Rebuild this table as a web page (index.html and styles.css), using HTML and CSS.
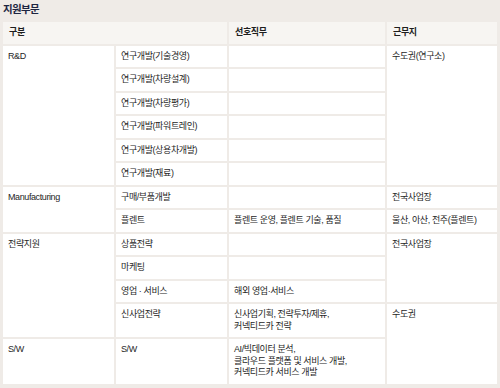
FILE: index.html
```html
<!DOCTYPE html>
<html lang="ko">
<head>
<meta charset="utf-8">
<title>지원부문</title>
<link rel="stylesheet" href="styles.css">
</head>
<body>
<div class="page">
  <h2 class="title">지원부문</h2>
  <table class="grid">
    <colgroup>
      <col class="c1"><col class="c2"><col class="c3"><col class="c4">
    </colgroup>
    <thead>
      <tr>
        <th colspan="2">구분</th>
        <th>선호직무</th>
        <th>근무지</th>
      </tr>
    </thead>
    <tbody>
      <tr>
        <td rowspan="6">R&amp;D</td>
        <td>연구개발(기술경영)</td>
        <td></td>
        <td rowspan="6">수도권(연구소)</td>
      </tr>
      <tr><td>연구개발(차량설계)</td><td></td></tr>
      <tr><td>연구개발(차량평가)</td><td></td></tr>
      <tr><td>연구개발(파워트레인)</td><td></td></tr>
      <tr><td>연구개발(상용차개발)</td><td></td></tr>
      <tr><td>연구개발(재료)</td><td></td></tr>
      <tr>
        <td rowspan="2">Manufacturing</td>
        <td>구매/부품개발</td>
        <td></td>
        <td>전국사업장</td>
      </tr>
      <tr>
        <td>플렌트</td>
        <td>플렌트 운영, 플렌트 기술, 품질</td>
        <td>울산, 아산, 전주(플렌트)</td>
      </tr>
      <tr>
        <td rowspan="4">전략지원</td>
        <td>상품전략</td>
        <td></td>
        <td rowspan="3">전국사업장</td>
      </tr>
      <tr><td>마케팅</td><td></td></tr>
      <tr><td>영업 · 서비스</td><td>해외 영업·서비스</td></tr>
      <tr>
        <td>신사업전략</td>
        <td>신사업기획, 전략투자/제휴,<br>커넥티드카 전략</td>
        <td rowspan="2">수도권</td>
      </tr>
      <tr>
        <td>S/W</td>
        <td>S/W</td>
        <td>AI/빅데이터 분석,<br>클라우드 플랫폼 및 서비스 개발,<br>커넥티드카 서비스 개발</td>
      </tr>
    </tbody>
  </table>
</div>
</body>
</html>
```

FILE: styles.css
```css
html, body {
  margin: 0;
  padding: 0;
  background: #efebe7;
}

.page {
  padding: 2px 1px 0;
  font-family: "Liberation Sans", "Noto Sans CJK KR", sans-serif;
  color: #262626;
}

.title {
  margin: 0 0 4px 2px;
  font-size: 10.5px;
  line-height: 14px;
  font-weight: bold;
  color: #1d2541;
  letter-spacing: -0.7px;
}

.grid {
  width: 498px;
  table-layout: fixed;
  border-collapse: separate;
  border-spacing: 2px;
  font-size: 9px;
  line-height: 11.5px;
}

.c1 { width: 111px; }
.c2 { width: 111px; }
.c3 { width: 156px; }
.c4 { width: 110px; }

.grid th,
.grid td {
  background: #fff;
  padding: 5px 5px;
  text-align: left;
  vertical-align: top;
  letter-spacing: -0.4px;
}

.grid th {
  background: #f7f5f2;
  color: #1e1e1e;
  font-weight: bold;
  padding: 5px 6px;
}
```
